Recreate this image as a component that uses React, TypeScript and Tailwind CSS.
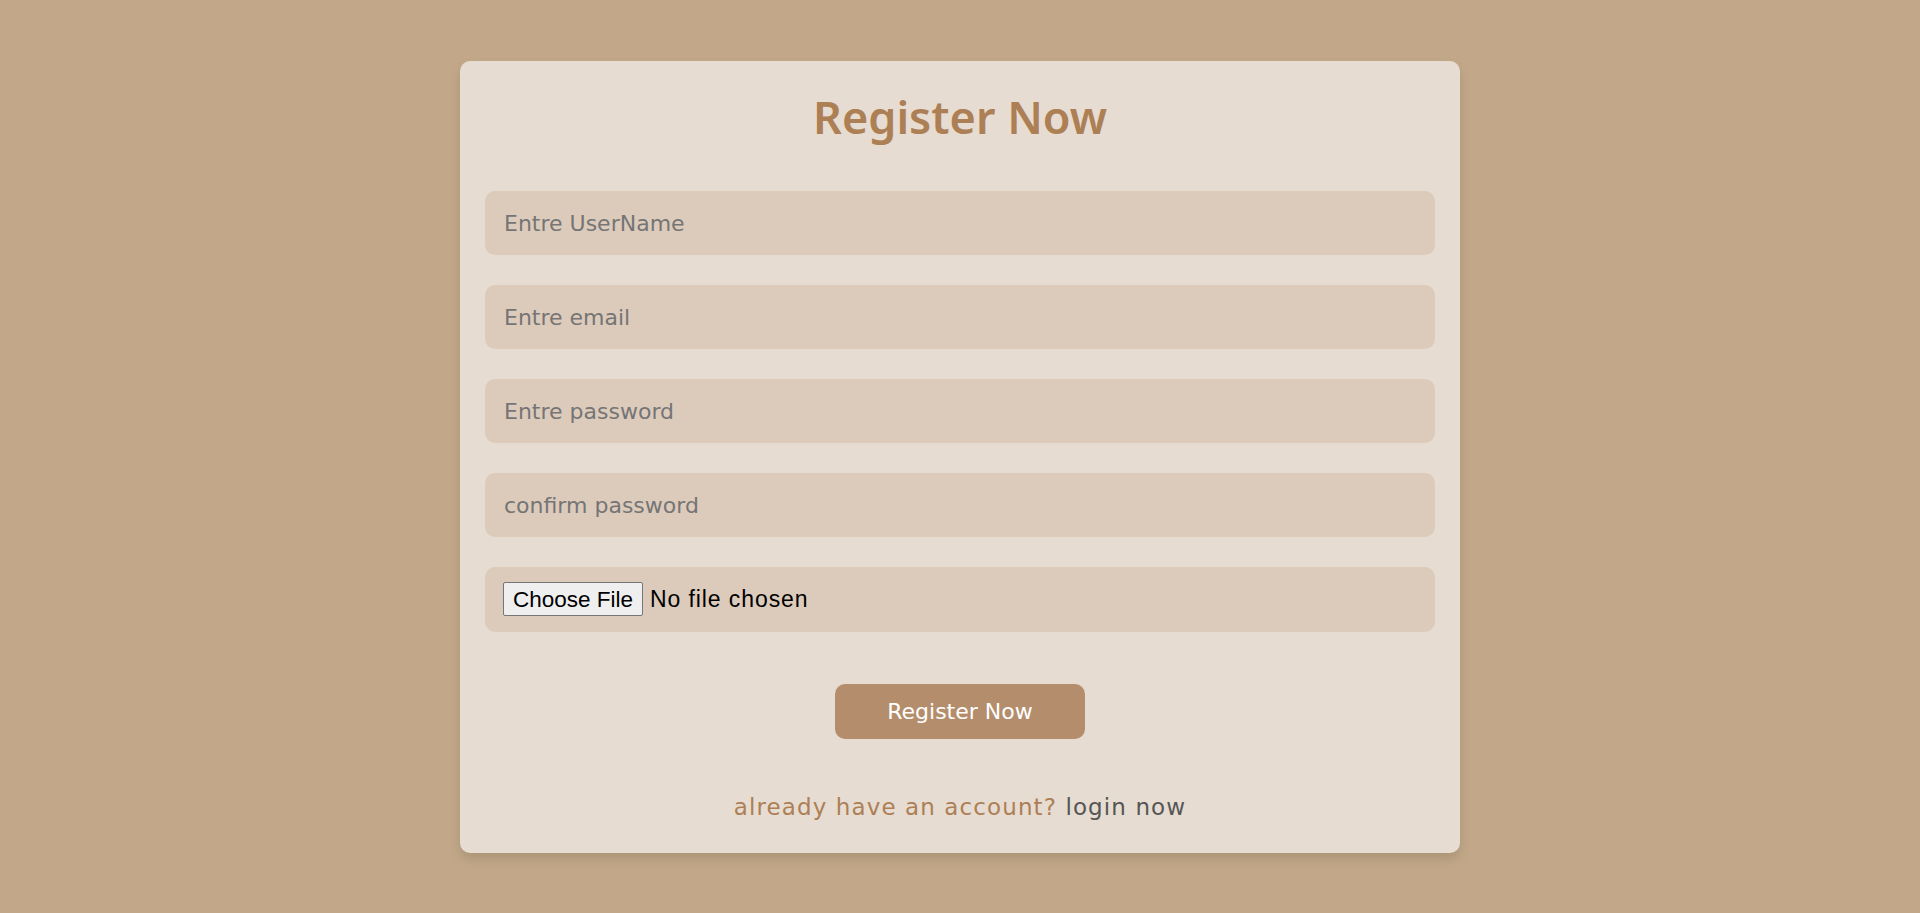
import React from "react";

const fields = [
  { type: "text", placeholder: "Entre UserName" },
  { type: "email", placeholder: "Entre email" },
  { type: "password", placeholder: "Entre password" },
  { type: "password", placeholder: "confirm password" },
];

export default function App() {
  return (
    <main className="min-h-screen bg-[#c2a888] flex justify-center pt-[61px] font-['DejaVu_Sans',sans-serif]">
      <form
        className="w-[1000px] h-fit bg-[#e6dcd2] rounded-[10px] shadow-[0_6px_12px_rgba(0,0,0,0.12)] px-[25px] pt-[22px] pb-[29px] flex flex-col items-center"
        onSubmit={(e) => e.preventDefault()}
      >
        <h3 className="font-['Noto_Sans',sans-serif] text-[45px] leading-[68px] font-semibold text-[#ad7f55]">
          Register Now
        </h3>

        <div className="w-full mt-[40px] flex flex-col gap-[30px]">
          {fields.map((f) => (
            <input
              key={f.placeholder}
              type={f.type}
              placeholder={f.placeholder}
              className="w-full h-[64px] rounded-[10px] bg-[#dccbbb] px-[19px] text-[22px] text-[#333] placeholder:text-[#757575] outline-none"
            />
          ))}
          <div className="w-full h-[65px] rounded-[10px] bg-[#dccbbb] px-[18px] flex items-center">
            <input
              type="file"
              accept="image/*"
              className="font-['Liberation_Sans',Arial,sans-serif] text-[23px] tracking-[0.9px] text-black file:h-[34px] file:px-[9px] file:mr-[7px] file:text-[22.5px] file:tracking-normal file:bg-[#efefef] file:border file:border-solid file:border-[#767676] file:rounded-[2px] file:text-black"
            />
          </div>
        </div>

        <button
          type="submit"
          className="mt-[52px] w-[250px] h-[55px] rounded-[10px] bg-[#b48e6c] text-white text-[22px]"
        >
          Register Now
        </button>

        <p className="mt-[52px] text-[23px] tracking-[1.1px] leading-[33px] text-[#ad7f55]">
          already have an account?{" "}
          <a href="#" className="text-[#555]">
            login now
          </a>
        </p>
      </form>
    </main>
  );
}
